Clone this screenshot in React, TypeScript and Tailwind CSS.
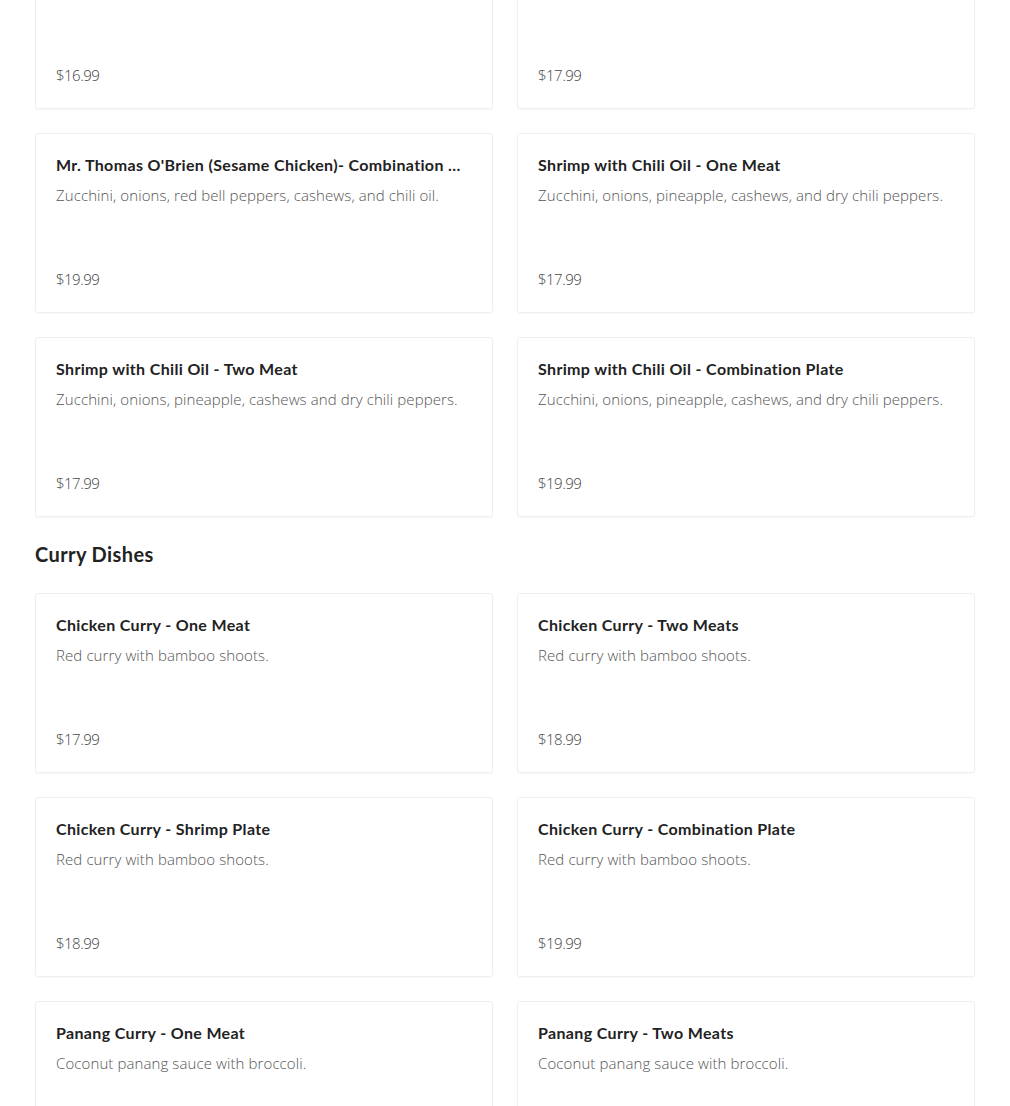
import React from "react";

type Dish = { name: string; desc: string; price: string };

const topRows: Dish[] = [
  { name: "Mr. Thomas O'Brien (Sesame Chicken)- Two Meats", desc: "Zucchini, onions, red bell peppers, cashews, and chili oil.", price: "$16.99" },
  { name: "Shrimp with Chili Oil - Shrimp Plate", desc: "Zucchini, onions, pineapple, cashews, and dry chili peppers.", price: "$17.99" },
  { name: "Mr. Thomas O'Brien (Sesame Chicken)- Combination Plate", desc: "Zucchini, onions, red bell peppers, cashews, and chili oil.", price: "$19.99" },
  { name: "Shrimp with Chili Oil - One Meat", desc: "Zucchini, onions, pineapple, cashews, and dry chili peppers.", price: "$17.99" },
  { name: "Shrimp with Chili Oil - Two Meat", desc: "Zucchini, onions, pineapple, cashews and dry chili peppers.", price: "$17.99" },
  { name: "Shrimp with Chili Oil - Combination Plate", desc: "Zucchini, onions, pineapple, cashews, and dry chili peppers.", price: "$19.99" },
];

const curry: Dish[] = [
  { name: "Chicken Curry - One Meat", desc: "Red curry with bamboo shoots.", price: "$17.99" },
  { name: "Chicken Curry - Two Meats", desc: "Red curry with bamboo shoots.", price: "$18.99" },
  { name: "Chicken Curry - Shrimp Plate", desc: "Red curry with bamboo shoots.", price: "$18.99" },
  { name: "Chicken Curry - Combination Plate", desc: "Red curry with bamboo shoots.", price: "$19.99" },
  { name: "Panang Curry - One Meat", desc: "Coconut panang sauce with broccoli.", price: "$17.99" },
  { name: "Panang Curry - Two Meats", desc: "Coconut panang sauce with broccoli.", price: "$18.99" },
];

function DishCard({ dish }: { dish: Dish }) {
  return (
    <div className="h-[180px] bg-white border border-[#efefef] rounded-[3px] shadow-[0_1px_2px_rgba(0,0,0,0.03)] px-[20px] pt-[20px] pb-[21px] flex flex-col">
      <h3 className="mr-[10px] text-[16px] leading-[22px] font-bold text-[#222] truncate font-['Lato',sans-serif] tracking-[0.35px]">
        {dish.name}
      </h3>
      <p className="mt-[9px] text-[15px] leading-[20px] font-light text-[#555] font-['Open_Sans',sans-serif] tracking-[0.1px]">
        {dish.desc}
      </p>
      <div className="mt-auto text-[15px] leading-[24px] font-light text-[#444] font-['Open_Sans',sans-serif] tracking-[-0.5px]">
        {dish.price}
      </div>
    </div>
  );
}

export default function App() {
  return (
    <div className="bg-white min-h-screen overflow-hidden">
      <div className="w-[940px] ml-[35px] -mt-[71px]">
        <div className="grid grid-cols-2 gap-6">
          {topRows.map((d, i) => (
            <DishCard key={i} dish={d} />
          ))}
        </div>

        <h2 className="mt-[23px] mb-[25px] text-[20px] leading-[28px] font-bold text-[#222] font-['Lato',sans-serif] tracking-[0.4px]">
          Curry Dishes
        </h2>

        <div className="grid grid-cols-2 gap-6">
          {curry.map((d, i) => (
            <DishCard key={i} dish={d} />
          ))}
        </div>
      </div>
    </div>
  );
}
